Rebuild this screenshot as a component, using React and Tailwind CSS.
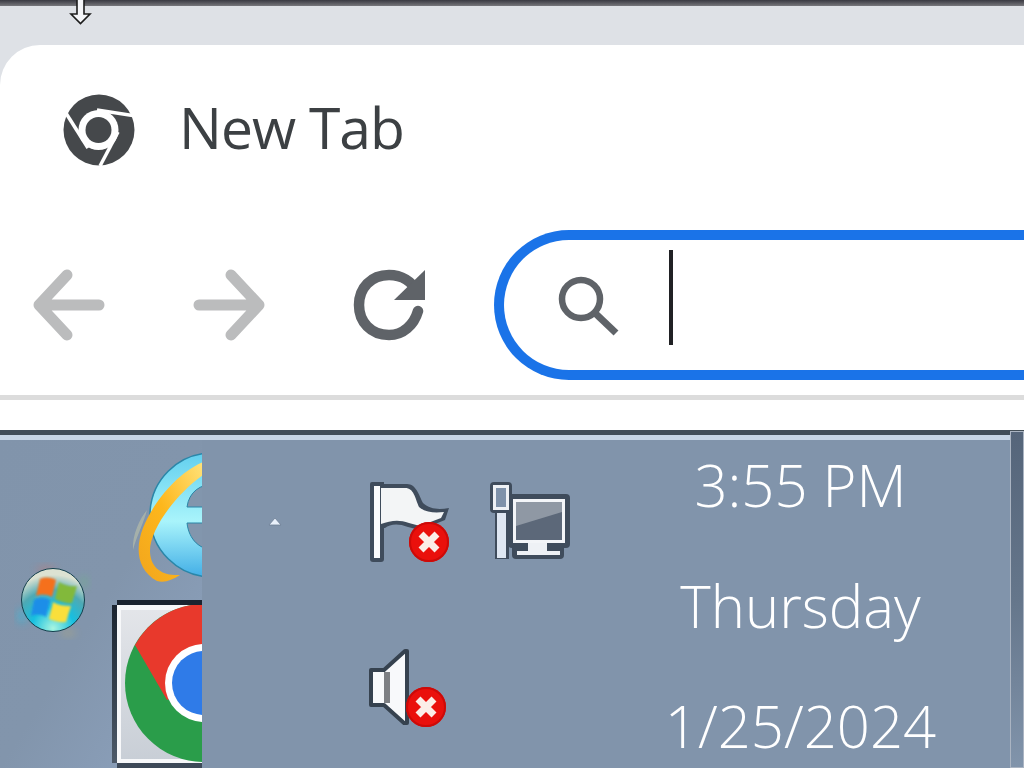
import React from "react";

const sans = { fontFamily: '"Open Sans", "Noto Sans", sans-serif' };

function Cursor() {
  return (
    <svg className="absolute left-[69px] top-0" width="24" height="26" viewBox="0 0 24 26">
      <path d="M8 -1V14H2L11.5 23.5L21 14H15V-1Z" fill="#f4f5f8" stroke="#1c1c1c" strokeWidth="1.6" />
    </svg>
  );
}

function ChromeMono() {
  return (
    <svg width="74" height="74" viewBox="62 93 74 74" className="shrink-0">
      <circle cx="99" cy="130" r="35.500" fill="#45484b" />
      <circle cx="98.500" cy="130" r="20" fill="#fff" />
      <circle cx="98.500" cy="130" r="13" fill="#45484b" />
      <path d="M64 110L88 148" stroke="#fff" strokeWidth="3.500" />
      <path d="M97 110L136 116" stroke="#fff" strokeWidth="3.500" />
      <path d="M118 132L100 166" stroke="#fff" strokeWidth="3.500" />
    </svg>
  );
}

function Arrow({ flip }) {
  return (
    <svg width="72" height="72" viewBox="0 0 72 72" className={flip ? "-scale-x-100 shrink-0" : "shrink-0"}>
      <path d="M34 6L6 36L34 66M6 36H66" fill="none" stroke="#bbbcbd" strokeWidth="11" strokeLinecap="round" strokeLinejoin="round" />
    </svg>
  );
}

function Reload() {
  return (
    <svg width="72" height="72" viewBox="352 269 72 72" className="shrink-0">
      <path d="M417 293C411 281 400 275 388 275C370 275 358 288 358 305C358 322 370 335 388 335C402 335 413 325 417 311" fill="none" stroke="#5f6368" strokeWidth="10.500" strokeLinecap="round" />
      <path d="M424 270V300H393Z" fill="#5f6368" />
    </svg>
  );
}

function Search() {
  return (
    <svg width="62" height="62" viewBox="557 273 62 62" className="shrink-0">
      <circle cx="581" cy="298" r="19" fill="none" stroke="#5f6368" strokeWidth="6.500" />
      <path d="M596 313L616 332" stroke="#5f6368" strokeWidth="7" />
    </svg>
  );
}

function Red({ cx, cy }) {
  return (
    <g>
      <circle cx={cx} cy={cy} r="20" fill="#ea100c" />
      <circle cx={cx} cy={cy} r="19" fill="none" stroke="#cc0a08" strokeWidth="2" />
      <path d={`M${cx - 8} ${cy - 8}L${cx + 8} ${cy + 8}M${cx + 8} ${cy - 8}L${cx - 8} ${cy + 8}`} stroke="#fbeee8" strokeWidth="7" />
    </g>
  );
}

function Flag() {
  return (
    <svg width="82" height="82" viewBox="369 481 82 82" className="block shrink-0">
      <path d="M370 484A2 2 0 0 1 372 482H384V559A3 3 0 0 1 381 562H373A3 3 0 0 1 370 559Z" fill="#3f4c5c" />
      <rect x="374" y="486" width="6" height="72" fill="#fbfcfd" />
      <path d="M381 484H407C416 484 419 495 423 503C430 509 438 510 449 508L445 520L420 530L408 527C398 523 390 524 385 528H381Z" fill="#3f4c5c" />
      <path d="M381 488H405C414 488 415 498 419 507C426 513 436 513 444 512L441 518L420 526L409 523C398 519 390 521 381 524Z" fill="#f3f5f6" />
      <Red cx={429} cy={542} />
    </svg>
  );
}

function Network() {
  return (
    <svg width="82" height="80" viewBox="488 481 82 80" className="block shrink-0">
      <rect x="507" y="494" width="62" height="54" rx="4" fill="#3f4c5c" />
      <rect x="512" y="499" width="52" height="44" fill="#f3f5f8" />
      <rect x="515" y="502" width="46" height="38" fill="#5c6879" />
      <path d="M515 502H561V512L515 526Z" fill="#8f98a4" />
      <rect x="511" y="544" width="52" height="15" rx="4" fill="#3f4c5c" />
      <rect x="527" y="543" width="19" height="8" fill="#eef1f5" />
      <rect x="516" y="551" width="43" height="4" fill="#eef1f5" />
      <rect x="494" y="511" width="14" height="48" fill="#3f4c5c" />
      <rect x="496" y="512" width="9" height="46" fill="#dfe7f2" />
      <rect x="489" y="482" width="22" height="31" rx="4" fill="#3f4c5c" />
      <rect x="492" y="485" width="16" height="25" fill="#eef1f5" />
      <rect x="495" y="488" width="10" height="19" fill="#7f92aa" />
    </svg>
  );
}

function Speaker() {
  return (
    <svg width="78" height="80" viewBox="369 647 78 80" className="block shrink-0">
      <path d="M371 669H384L405 650H407V722L404 722L384 704H371Z" fill="#f8f9fb" stroke="#36424f" strokeWidth="4" strokeLinejoin="round" />
      <rect x="384" y="671" width="6" height="31" fill="#7d7f83" />
      <Red cx={426} cy={706} />
    </svg>
  );
}

function Caret() {
  return (
    <svg width="14" height="10" viewBox="0 0 14 10" className="block">
      <path d="M7 1L13 8H1Z" fill="#e8f0fa" stroke="#6d7f96" strokeWidth="0.800" />
    </svg>
  );
}

function Orb() {
  return (
    <svg className="absolute left-[14px] top-[122px]" width="78" height="78" viewBox="14 562 78 78">
      <defs>
        <radialGradient id="orbBg" cx="50%" cy="95%" r="85%">
          <stop offset="0%" stopColor="#a8f5e0" />
          <stop offset="40%" stopColor="#17bfe0" />
          <stop offset="72%" stopColor="#4fa9b4" />
          <stop offset="100%" stopColor="#dce2d2" />
        </radialGradient>
        <filter id="b3" x="-150%" y="-150%" width="400%" height="400%"><feGaussianBlur stdDeviation="4" /></filter>
        <filter id="b1" x="-20%" y="-20%" width="140%" height="140%"><feGaussianBlur stdDeviation="0.800" /></filter>
      </defs>
      <ellipse cx="46" cy="570" rx="10" ry="3" fill="#f0644a" opacity="0.4" filter="url(#b3)" />
      <ellipse cx="84" cy="582" rx="3" ry="6" fill="#5fcf6a" opacity="0.4" filter="url(#b3)" />
      <ellipse cx="22" cy="616" rx="3" ry="7" fill="#18c8f0" opacity="0.7" filter="url(#b3)" />
      <ellipse cx="68" cy="633" rx="8" ry="2" fill="#f1c23f" opacity="0.4" filter="url(#b3)" />
      <circle cx="53" cy="600" r="31.500" fill="url(#orbBg)" stroke="#123f4c" strokeWidth="1" />
      <g filter="url(#b1)">
        <path d="M40 579C45 577 50 577 56 580L52 597C46 594 41 594 36 596Z" fill="#f5701f" />
        <path d="M59 582C64 585 70 587 77 586L72 603C66 604 60 601 55 599Z" fill="#82b93a" />
        <path d="M34 600C39 597 44 597 50 600L46 617C41 614 36 614 31 616Z" fill="#1f8ee8" />
        <path d="M53 602C58 605 65 606 71 606L66 622C60 623 55 621 49 619Z" fill="#fadf3a" />
      </g>
    </svg>
  );
}

function IE() {
  return (
    <svg className="absolute left-[128px] top-[10px]" width="74" height="136" viewBox="128 450 74 136">
      <defs>
        <linearGradient id="ieBlue" x1="0" y1="0" x2="0" y2="1">
          <stop offset="0%" stopColor="#62cfee" />
          <stop offset="55%" stopColor="#a9f4fb" />
          <stop offset="100%" stopColor="#42aee6" />
        </linearGradient>
        <linearGradient id="ieGold" x1="1" y1="0" x2="0" y2="1">
          <stop offset="0%" stopColor="#ffe27a" />
          <stop offset="50%" stopColor="#fdb71c" />
          <stop offset="100%" stopColor="#f2a51d" />
        </linearGradient>
      </defs>
      <circle cx="212" cy="515" r="62" fill="url(#ieBlue)" stroke="#2a86a8" strokeWidth="1.500" />
      <path d="M187 507C189 492 200 484 215 484V507ZM187 523H215V550C200 550 189 540 187 523Z" fill="#8296ad" stroke="#2a86a8" strokeWidth="1" />
      <path d="M203 462C175 474 152 505 143 528C135 548 137 570 157 581C165 583 172 580 180 575C166 576 151 571 150 552C149 530 176 494 203 475Z" fill="url(#ieGold)" />
      <path d="M147 510C140 518 132 535 133 550C137 535 143 525 147 510Z" fill="#c3c6a9" opacity="0.55" />
    </svg>
  );
}

function ChromeTile() {
  return (
    <div className="absolute left-[112px] top-[160px] w-[90px] h-[168px] flex">
      <div className="w-[5px] h-[158px] shrink-0 mt-[5px] bg-gradient-to-b from-[#1b2430] to-[#4d5a69]" />
      <div className="flex-1 min-w-0 flex flex-col">
        <div className="h-[5px] shrink-0 bg-[#1b2430]" />
        <svg width="85" height="158" viewBox="117 605 85 158" className="block shrink-0">
          <defs>
            <linearGradient id="tileBg" x1="0" y1="0" x2="0" y2="1">
              <stop offset="0%" stopColor="#e4e6ea" />
              <stop offset="100%" stopColor="#c8ced6" />
            </linearGradient>
          </defs>
          <rect x="117" y="605" width="85" height="158" fill="url(#tileBg)" />
          <rect x="117" y="605" width="4" height="158" fill="#f7f8fa" />
          <rect x="117" y="605" width="85" height="5" fill="#f7f8fa" />
          <rect x="117" y="759" width="85" height="4" fill="#f7f8fa" />
          <circle cx="204" cy="683" r="79" fill="#2a9d4a" />
          <path d="M204 604A79 79 0 0 0 135 645L167 700L204 683Z" fill="#e8392c" />
          <circle cx="204" cy="683" r="39" fill="#fff" />
          <circle cx="204" cy="683" r="32" fill="#2f7be8" />
        </svg>
        <div className="h-[5px] shrink-0 bg-[#3d4958]" />
      </div>
    </div>
  );
}

export default function App() {
  return (
    <div className="relative w-[1024px] h-[768px] overflow-hidden flex flex-col bg-white" style={sans}>
      <div className="h-[6px] shrink-0 bg-gradient-to-b from-[#3a3a42] to-[#77777c]" />
      <div className="h-[39px] shrink-0 bg-[#dee1e6]" />
      <div className="bg-[#dee1e6] shrink-0">
        <div className="h-[350px] bg-white rounded-tl-[40px] flex flex-col">
          <div className="h-[170px] shrink-0 flex items-center pl-[62px] gap-[43px]">
            <ChromeMono />
            <span className="text-[57px] leading-none tracking-[-1px] text-[#3c4043] -mt-[5px]">New Tab</span>
          </div>
          <div className="flex items-start">
            <div className="flex items-center gap-[88px] pl-[33px] pt-[54px]">
              <Arrow />
              <Arrow flip />
              <Reload />
            </div>
            <div className="ml-[69px] mt-[15px] flex-1 h-[150px] rounded-l-[75px] border-[10px] border-r-0 border-[#1a73e8] flex items-center pl-[53px]">
              <Search />
              <div className="ml-[50px] w-[4px] h-[95px] -mt-[16px] bg-[#202124]" />
            </div>
          </div>
        </div>
      </div>
      <div className="h-[5px] shrink-0 bg-[#dcdcdc]" />
      <div className="h-[30px] shrink-0 bg-white" />
      <div className="h-[5px] shrink-0 bg-[#434e57]" />
      <div className="h-[5px] shrink-0 bg-[#c8d5e3]" />
      <div className="flex-1 flex min-h-0">
        <div className="relative w-[202px] shrink-0 overflow-hidden bg-gradient-to-br from-[#8194ab] via-[#8295ac] to-[#8ea3bf]">
          <IE />
          <Orb />
          <ChromeTile />
        </div>
        <div className="flex-1 flex bg-[#8194ab] min-w-0">
          <div className="pl-[66px] pt-[77px] w-[167px] shrink-0">
            <Caret />
          </div>
          <div className="flex flex-col w-[240px] shrink-0 pt-[41px] gap-[85px]">
            <div className="flex gap-[38px]">
              <Flag />
              <Network />
            </div>
            <Speaker />
          </div>
          <div className="w-[383px] shrink-0 flex flex-col items-center text-white text-[58px] leading-[120.500px] font-[350] -mt-[15px]">
            <span>3:55 PM</span>
            <span>Thursday</span>
            <span>1/25/2024</span>
          </div>
        </div>
        <div className="w-[14px] shrink-0" />
      </div>
      <div className="absolute right-0 top-[431px] bottom-0 w-[14px] border border-[#aab4c2] bg-gradient-to-b from-[#55657a] via-[#65768b] to-[#8194ab]" />
      <Cursor />
    </div>
  );
}
